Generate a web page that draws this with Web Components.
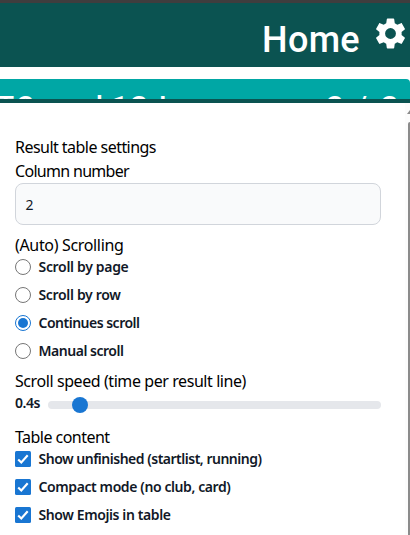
<!DOCTYPE html>
<html lang="en"><head><meta charset="utf-8"><title>Result settings</title>
<style>html,body{margin:0;height:100%;overflow:hidden;background:#fff}body{font-family:"Noto Sans","Open Sans",sans-serif}</style></head>
<body><results-app></results-app>
<script>
const define=(name,html,setup)=>customElements.define(name,class extends HTMLElement{
 connectedCallback(){if(this.shadowRoot)return;const t=document.createElement('template');t.innerHTML=html;
 this.attachShadow({mode:'open'}).append(t.content.cloneNode(true));if(setup)setup(this,this.shadowRoot)}});

/* A single line of text whose tracking is adjusted to the given width. */
define('fit-text','<style>:host{display:block;white-space:nowrap}span{display:inline-block}</style><span><slot></slot></span>',(h,r)=>{
 const s=r.querySelector('span'),n=h.textContent.length,w=+h.getAttribute('width');
 s.style.letterSpacing=((w-s.getBoundingClientRect().width)/n)+'px'});

define('page-header',`<style>:host{display:flex;justify-content:flex-end;box-sizing:border-box;height:67px;border-top:3px solid #3f3d3e;background:#0b5351;color:#fff;padding:0 4px 0 0}
fit-text{font:500 36px/42px Roboto,sans-serif;margin:16px 15px 0 0}svg{width:31px;height:31px;margin-top:14.5px}</style>
<fit-text width="98">Home</fit-text><svg viewBox="2 2 20 20" fill="#fff"><path d="M19.14 12.94c.04-.3.06-.61.06-.94 0-.32-.02-.64-.07-.94l2.03-1.58c.18-.14.23-.41.12-.61l-1.92-3.32c-.12-.22-.37-.29-.59-.22l-2.39.96c-.5-.38-1.03-.7-1.62-.94l-.36-2.54c-.04-.24-.24-.41-.48-.41h-3.84c-.24 0-.43.17-.47.41l-.36 2.54c-.59.24-1.13.57-1.62.94l-2.39-.96c-.22-.08-.47 0-.59.22L2.74 8.87c-.12.21-.08.47.12.61l2.03 1.58c-.05.3-.09.63-.09.94s.02.64.07.94l-2.03 1.58c-.18.14-.23.41-.12.61l1.92 3.32c.12.22.37.29.59.22l2.39-.96c.5.38 1.03.7 1.62.94l.36 2.54c.05.24.24.41.48.41h3.84c.24 0 .44-.17.47-.41l.36-2.54c.59-.24 1.13-.56 1.62-.94l2.39.96c.22.08.47 0 .59-.22l1.92-3.32c.12-.22.07-.47-.12-.61zM12 15.5A3.5 3.5 0 1 1 12 8.5a3.5 3.5 0 0 1 0 7z"/></svg>`);

define('title-strip',`<style>:host{display:flex;justify-content:space-between;box-sizing:border-box;height:20px;margin-top:12px;overflow:hidden;background:#00a7a5;border-top-right-radius:4px;color:#fff;font:500 28px/32px Roboto,sans-serif;padding:12px 9px 0 0}
div{display:flex}.a{margin-left:-3px}.b{margin-left:18px}.c{margin-left:8px}.d{margin-left:10px}</style>
<div><fit-text class="a" width="39">TC</fit-text><fit-text class="b" width="50">and</fit-text><fit-text class="c" width="37">1C</fit-text><fit-text class="d" width="14">L</fit-text></div><fit-text width="76">C / C</fit-text>`);

define('field-title',`<style>:host{display:block;font-size:16px;line-height:24px;color:#000}</style><fit-text></fit-text>`,(h,r)=>{
 const old=r.querySelector('fit-text'),f=document.createElement('fit-text');f.setAttribute('width',h.getAttribute('width'));f.textContent=h.getAttribute('text');old.replaceWith(f)});

define('choice-row',`<style>:host{display:flex;align-items:center;height:20px;margin-bottom:8px;color:#111827;font-size:14px;font-weight:600;line-height:20px}
svg{width:16px;height:16px;margin-right:7.5px;flex:none}</style>`,(h,r)=>{
 const on=h.hasAttribute('checked'),box=h.getAttribute('kind')==='checkbox';
 const icon=box?'<rect width="16" height="16" rx="1.5" fill="#1976d2"/><path d="M3.2 8.4l3.1 3.1 6.4-7.3" fill="none" stroke="#fff" stroke-width="2.1"/>'
 :`<circle cx="8" cy="8" r="7.5" fill="#fff" stroke="${on?'#1976d2':'#767676'}"/>`+(on?'<circle cx="8" cy="8" r="5" fill="#1976d2"/>':'');
 r.innerHTML+=`<svg viewBox="0 0 16 16">${icon}</svg><fit-text width="${h.getAttribute('width')}">${h.getAttribute('text')}</fit-text>`});

define('number-field',`<style>:host{display:flex;align-items:center;box-sizing:border-box;width:366px;height:42px;border:1px solid #d1d5db;border-radius:8px;background:#f9fafb;padding:0 9.5px;color:#111827;font-size:14px}</style><slot></slot>`);

define('speed-slider',`<style>:host{display:flex;align-items:center;height:20px;width:366px;color:#111827;font-size:14px;line-height:20px;font-weight:600}
.track{flex:1;height:8px;border-radius:4px;background:#e5e7eb;margin:3px 0 0 8px;display:flex;align-items:center}.thumb{width:16px;height:16px;border-radius:50%;background:#1976d2;margin-left:24px}</style><fit-text width="25">0.4s</fit-text><div class="track"><div class="thumb"></div></div>`);

define('scroll-rail',`<style>:host{display:flex;flex-direction:column;width:5px;background:#fcfcfc;align-items:flex-end}
svg{width:3px;height:5px;margin-top:7px}.bar{width:2px;flex:1;background:#8b8b8b;margin-top:7px;border-top-left-radius:2px}</style><svg viewBox="0 0 3 5"><path d="M0 4L3 0V4Z" fill="#8b8b8b"/></svg><div class="bar"></div>`);

define('results-app',`<style>:host{display:flex;flex-direction:column;height:535px;width:410px}
.sheet{flex:1;min-height:0;display:flex;justify-content:space-between;border-top:4px solid #0b5351;background:#fff}
.form{padding:32px 0 0 15px;flex:none}.auto{margin-top:8px}.speed{margin-bottom:12px}</style>
<page-header></page-header><title-strip></title-strip>
<div class="sheet"><div class="form">
<field-title text="Result table settings" width="141"></field-title><field-title text="Column number" width="114"></field-title><number-field>2</number-field>
<field-title class="auto" text="(Auto) Scrolling" width="108.5"></field-title>
<div><choice-row text="Scroll by page" width="90"></choice-row><choice-row text="Scroll by row" width="82"></choice-row><choice-row checked text="Continues scroll" width="101"></choice-row><choice-row text="Manual scroll" width="85"></choice-row></div>
<field-title text="Scroll speed (time per result line)" width="231"></field-title><speed-slider class="speed"></speed-slider>
<field-title text="Table content" width="94.5"></field-title>
<div><choice-row kind="checkbox" checked text="Show unfinished (startlist, running)" width="223"></choice-row><choice-row kind="checkbox" checked text="Compact mode (no club, card)" width="192"></choice-row><choice-row kind="checkbox" checked text="Show Emojis in table" width="132"></choice-row></div>
</div><scroll-rail></scroll-rail></div>`);
</script></body></html>
